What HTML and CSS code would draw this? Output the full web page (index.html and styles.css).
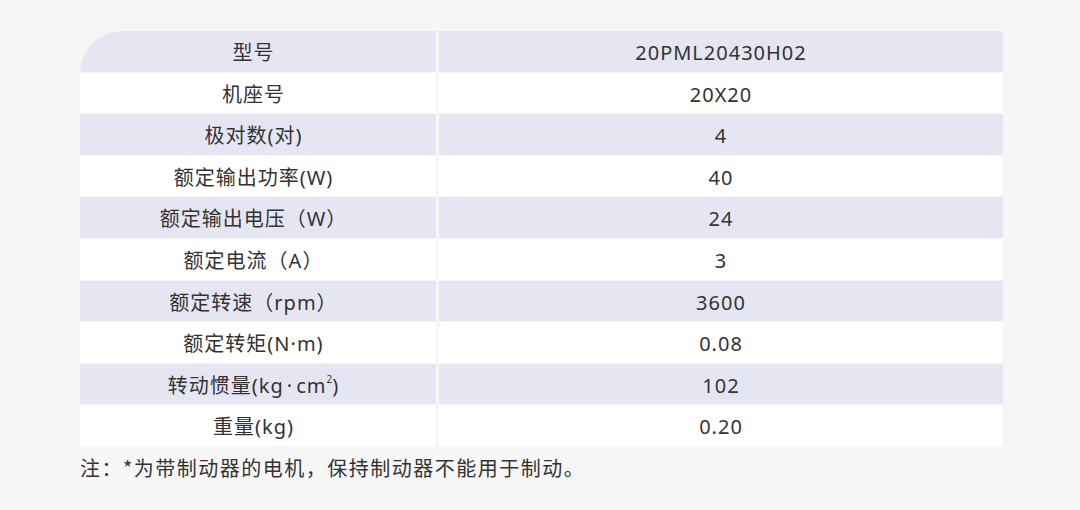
FILE: index.html
```html
<!DOCTYPE html>
<html lang="zh-CN">
<head>
<meta charset="utf-8">
<link rel="stylesheet" href="styles.css">
</head>
<body>
<div class="page">
  <div class="spec">
    <div class="row alt"><div class="cell key">型号</div><div class="cell">20PML20430H02</div></div>
    <div class="row"><div class="cell key">机座号</div><div class="cell">20X20</div></div>
    <div class="row alt"><div class="cell key">极对数(对)</div><div class="cell">4</div></div>
    <div class="row"><div class="cell key">额定输出功率(W)</div><div class="cell">40</div></div>
    <div class="row alt"><div class="cell key">额定输出电压（W）</div><div class="cell">24</div></div>
    <div class="row"><div class="cell key">额定电流（A）</div><div class="cell">3</div></div>
    <div class="row alt"><div class="cell key">额定转速（rpm）</div><div class="cell">3600</div></div>
    <div class="row"><div class="cell key">额定转矩(N·m)</div><div class="cell">0.08</div></div>
    <div class="row alt"><div class="cell key">转动惯量(kg<span class="dot">·</span>cm<sup>2</sup>)</div><div class="cell">102</div></div>
    <div class="row"><div class="cell key">重量(kg)</div><div class="cell">0.20</div></div>
  </div>
  <p class="note">注：*为带制动器的电机，保持制动器不能用于制动。</p>
</div>
</body>
</html>
```

FILE: styles.css
```css
html, body {
  margin: 0;
  padding: 0;
  background: #f6f6f6;
}
body {
  width: 1080px;
  height: 510px;
  overflow: hidden;
  font-family: "Noto Sans", "Noto Sans CJK SC", sans-serif;
  color: #333;
}
.page {
  padding: 31px 0 0 80px;
}
.spec {
  width: 923px;
  display: flex;
  flex-direction: column;
  gap: 1px;
  border-top-left-radius: 42px;
  overflow: hidden;
}
.row {
  display: grid;
  grid-template-columns: 356px 564px;
  column-gap: 3px;
  height: 40.6px;
}
.cell {
  background: #fff;
  text-align: center;
  font-size: 20px;
  letter-spacing: 1px;
  padding-top: 4px;
  line-height: 36.6px;
  white-space: nowrap;
}
.cell.key {
  padding-right: 9px;
}
.row.alt .cell {
  background: #e6e6f2;
}
.dot {
  padding: 0 3px;
}
.cell sup {
  font-size: 10px;
  line-height: 1;
  vertical-align: 10px;
  letter-spacing: 0;
}
.note {
  margin: 8px 0 0 0;
  font-family: "Noto Sans CJK SC", sans-serif;
  font-size: 20px;
  letter-spacing: 1.5px;
  line-height: 28px;
}
```
